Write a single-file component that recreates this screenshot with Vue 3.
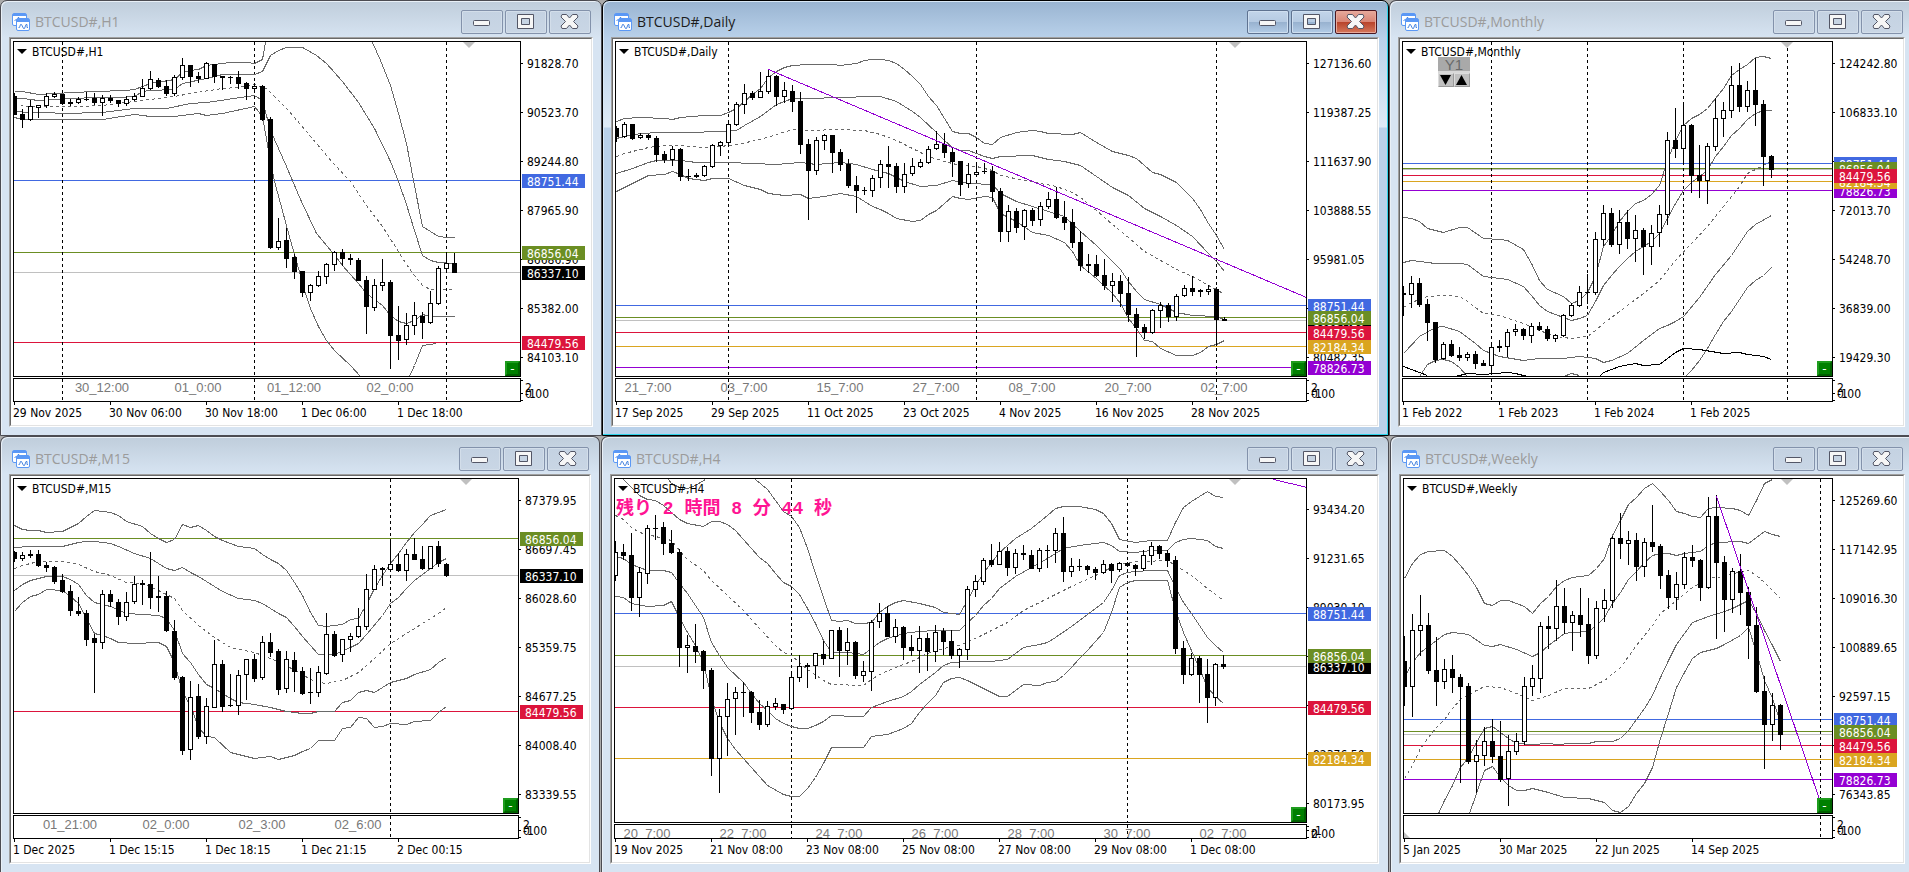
<script setup>
const STEP = 8
const UNITS = 3

const BLUE = '#4169e1'
const GREEN = '#6b8e23'
const RED = '#dc143c'
const GOLD = '#daa520'
const PURPLE = '#9400d3'
const SILVER = '#c0c0c0'

const sources = [
  {
    title: 'BTCUSD#,H1', origin: 126, height: 334, sub: 22, marker: 455,
    prices: [[190, '91828.70'], [337, '90523.70'], [484, '89244.80'], [631, '87965.90'], [778, '86686.90'], [925, '85382.00'], [1072, '84103.10']],
    levels: [[541, BLUE], [757, GREEN], [817, SILVER], [1027, RED]],
    tags: [[817, '#000', '86337.10'], [541, BLUE, '88751.44'], [757, GREEN, '86856.04'], [1027, RED, '84479.56']],
    seps: [6, 30, 54],
    times: ['29 Nov 2025', '30 Nov 06:00', '30 Nov 18:00', '1 Dec 06:00', '1 Dec 18:00'],
    notes: [[11, '30_12:00'], [23, '01_0:00'], [35, '01_12:00'], [47, '02_0:00']],
    trends: [],
    bands: [
      '0,273 1,273 3,282 5,279 10,274 14,271 15,268 16,258 17,250 20,238 21,218 22,210 23,208 24,195 27,187 29,187 30,190 31,177 31.4,126',
      '44.8,126 45.8,180 47,255 48,340 49,430 49.9,540 51,680 53,709 54,713 55,713',
      '0,294 1,296 3,300 5,297 10,292 13,291 15,288 16,275 17,270 20,268 21,250 24,235 26,223 30,222 31,215 32,165 33,150 34,142 36,142 37.8,165 39,190 41,245 43,307 45,385 47,485 48,545 49,612 50,690 51,765 52,780 53,787 55,790',
      '0,335 2,338 4,337 6,340 11,337 13,330 15,324 19,324 22,309 24,306 30,287 31,300 32,390 34,500 35.7,597 37.8,700 39.7,757 41,797 43,850 44,880 46,915 47,945 48,963 49,969 50,960 51,943 52,949 55,949',
      '0,352 1,358 6,358 11,357 15,343 17,349 20,349 23,340 24,346 26,339 30,319 31,350 31.7,450 32.5,545 33.2,610 34.5,720 35.7,825 36.4,880 37,925 38,980 39,1020 40,1050 42,1097 43.3,1128',
      '49.4,1128 50,1095 51,1035 52,1032 52.8,1030'
    ],
    mid: '0,315 2,319 6,320 8,319 11,315 15,305 17,298 20,290 22,280 26,266 28,262 30,253 31.5,265 34,325 35.7,373 37.8,430 39.9,490 42,545 44,617 46,680 47.8,745 49,793 50,825 51,855 52,867 55,868',
    bars: `-280 288 345 345|-326 342 361 383|+300 318 359 362|+315 316 322 353|+280 288 318 323|+277 283 291 294|-282 282 312 312|-296 307 311 319|+291 298 309 312|-276 296 299 302|-279 294 309 315|+285 295 308 347|-285 294 303 308|-300 300 312 322|+289 297 311 318|+280 288 299 303|+237 264 290 292|+213 237 266 270|-233 240 261 264|-240 257 282 288|+225 231 282 287|+173 195 234 239|-195 195 231 261|-216 228 237 250|+186 189 236 238|-192 192 231 250|-228 228 234 270|-228 231 234 251|-213 231 252 267|-246 249 266 300|+250 258 266 276|-255 258 360 363|-351 357 743 746|+654 723 743 750|-684 720 776 803|-763 771 816 837|-812 814 878 890|+852 856 878 903|+813 829 857 860|+789 793 830 852|+753 757 794 813|-747 756 776 797|-762 773 780 795|-774 780 842 843|-828 840 920 1002|+838 856 923 933|+777 847 857 873|-840 847 1007 1107|-918 1005 1022 1080|+939 975 1019 1035|+906 945 977 1005|-935 948 968 1017|+873 909 969 971|+798 804 911 914|+757 789 806 816|-759 789 818 819`
  },
  {
    title: 'BTCUSD#,Daily', active: true, origin: 126, height: 334, sub: 22, marker: 619,
    prices: [[190, '127136.60'], [337, '119387.25'], [484, '111637.90'], [631, '103888.55'], [778, '95981.05'], [925, '88231.70'], [1072, '80482.35']],
    levels: [[916, BLUE], [952, GREEN], [961, SILVER], [997, RED], [1039, GOLD], [1102, PURPLE]],
    tags: [[961, '#000', '86337.10'], [916, BLUE, '88751.44'], [952, GREEN, '86856.04'], [997, RED, '84479.56'], [1039, GOLD, '82184.34'], [1102, PURPLE, '78826.73']],
    seps: [14, 45, 75],
    times: ['17 Sep 2025', '29 Sep 2025', '11 Oct 2025', '23 Oct 2025', '4 Nov 2025', '16 Nov 2025', '28 Nov 2025'],
    notes: [[4, '21_7:00'], [16, '03_7:00'], [28, '15_7:00'], [40, '27_7:00'], [52, '08_7:00'], [64, '20_7:00'], [76, '02_7:00']],
    trends: ['19,208 86.3,892'],
    bands: [
      '0,364 1,356 3,352 6,356 7,357 8,353 11,347 13,345 14,337 15,325 16,303 17,283 18,265 19,232 20,215 21,203 22,196 24,194 27,193 28,196 30,190 31,182 32,178 33,178 34,182 35,191 36,208 37,228 38,252 39,290 40,315 41,355 42,393 43,399 44,400 45,412 46,430 47,433 48,413 50,397 52,391 53,395 54,401 57,403 58,397 60,427 62,455 64,465 65,476 66,495 67,517 68,523 70,548 72,595 73,628 74,670 75,705 76,748',
      '0,414 1,408 2,402 5,398 9,397 13,395 15,390 16,375 18,350 19,330 20,313 22,294 24,294 28,292 32,289 33,290 35,304 37,335 38,353 40,397 41,422 42,442 43,451 44,452 46,468 47,474 48,469 52,466 54,477 56,484 58,497 60,530 62,562 64,585 66,625 68,650 70,677 72,710 74,760 75,785 76,815',
      '0,521 2,504 4,487 5,482 8,481 10,488 14,487 17,491 20,492 23,487 25,492 28,488 30,492 32,507 34,520 36,543 38,558 40,555 42,541 44,549 47,553 48,581 50,603 52,620 54,633 56,650 58,693 60,735 62,783 63,808 64,845 65,873 66,897 68,913 70,938 72,945 75,950 76,958',
      '0,575 2,549 4,526 6,524 7,514 8,522 9,535 11,541 12,536 14,535 16,555 18,567 19,579 21,586 23,583 24,596 26,588 28,580 30,590 32,620 33,628 34,641 35,656 37,664 38,660 39,644 40,630 42,590 43,595 44,598 46,590 47,592 48,640 50,665 52,697 54,707 56,727 57,755 58,795 60,835 62,880 63,910 64,955 65,985 66,1020 67,1025 68,1045 70,1066 72,1066 73,1058 74,1040 75,1033 76,1021'
    ],
    mid: '0,469 1,460 4,443 6,437 8,437 11,442 13,440 15,434 18,417 20,402 22,388 24,391 28,388 31,391 33,402 35,420 37,445 39,468 41,485 43,497 45,500 47,510 48,526 51,540 55,560 57,577 58,592 60,630 62,672 64,712 66,755 68,782 70,808 72,830 74,855 75,868 76,884',
    bars: `-378 384 411 427|+366 373 411 414|-373 373 416 419|+399 405 415 418|-402 406 415 419|-408 414 464 486|-453 462 480 489|+438 448 479 498|-444 447 530 543|-507 528 531 543|-519 525 531 534|+495 499 527 530|+432 436 500 503|+423 427 438 467|+362 373 428 432|+306 313 374 377|+252 280 314 342|-273 280 293 299|+216 274 293 294|+208 229 275 281|-225 228 290 318|+246 271 290 308|-255 273 305 335|-276 303 434 462|-417 432 513 660|+411 421 512 524|+402 406 422 449|-405 405 458 518|-447 457 494 512|-477 493 557 563|-529 555 572 639|-561 570 573 584|+525 535 572 590|+481 493 535 563|-438 493 500 563|-490 499 560 578|+490 523 560 578|+474 499 523 528|+477 487 500 504|+438 448 488 491|+393 433 448 450|-399 432 458 473|-444 457 485 531|-484 484 554 588|+490 523 553 563|+487 517 523 526|-489 513 517 522|-498 513 575 606|-565 573 697 726|+615 634 697 726|-624 633 684 699|+627 631 682 720|-625 630 662 678|+606 619 661 678|+576 598 620 627|-561 597 654 657|-603 651 668 689|-627 666 728 744|-693 726 798 813|-762 792 797 819|-765 792 828 831|-777 825 857 870|+819 844 857 906|-825 843 882 920|-831 879 945 966|-924 942 984 1071|-972 981 998 1017|+927 931 998 1001|+906 916 932 983|-909 915 951 966|+882 889 950 963|+855 865 889 891|-829 864 876 889|-867 871 875 891|+855 868 875 885|-861 867 960 1038|-951 957 962 963`
  },
  {
    title: 'BTCUSD#,Monthly', selector: true, origin: 126, height: 334, sub: 22, marker: 384,
    prices: [[190, '124242.80'], [337, '106833.10'], [484, '89423.40'], [631, '72013.70'], [778, '54248.70'], [925, '36839.00'], [1072, '19429.30']],
    levels: [[490, BLUE], [508, SILVER], [505, GREEN], [526, RED], [544, GOLD], [571, PURPLE]],
    tags: [[490, BLUE, '88751.44'], [505, GREEN, '86856.04'], [571, PURPLE, '78826.73'], [544, GOLD, '82184.34'], [526, RED, '84479.56']],
    seps: [11, 23, 35, 48],
    times: ['1 Feb 2022', '1 Feb 2023', '1 Feb 2024', '1 Feb 2025'],
    notes: [],
    trends: [],
    average: [
      '0,1098 3,1126',
      '6.5,1128 8,1119 10,1122 13,1117 14,1119 15.5,1128',
      '24.5,1128 25,1118 27,1099 29,1090 30,1096 32,1093 33,1075 34,1056 35,1045 37,1049 40,1060 42,1058 43,1064 45,1070 46,1078'
    ],
    bands: [
      '0,651 1,655 2,665 3,684 5,696 7,682 8,682 10,714 12,718 13,722 15,748 16,790 17,840 18,868 20,890 21,910 22,900 23,878 24,830 25,740 26,705 27,665 28,635 29,611 30,600 31,583 32,555 33,480 34,420 35,375 36,355 37,342 38,325 39,296 40,265 41,225 42,207 43,192 44,172 45,169 46,174',
      '0,788 1,781 4,790 7,790 8,793 10,828 13,837 15,858 16,885 17,915 18,933 20,952 21,962 22,955 23,945 24,905 25,855 26,827 27,800 28,775 29,755 31,725 32,700 33,655 34,610 35,570 36,548 38,510 39,470 40,440 41,405 42,385 43,358 44,340 45,331 46,331',
      '0,1060 2,1010 4,983 5,979 7,993 9,1030 10,1050 12,1069 15,1081 17,1075 20,1074 22,1069 24,1076 25,1088 26,1081 28,1060 30,1020 32,984 33,975 34,963 35,948 37,893 39,823 41,765 43,695 44,672 46,645',
      '2,1128 3,1093 4,1080 5,1077 6,1083 7,1103 8,1128',
      '20,1128 21,1120 22,1125',
      '35.3,1128 36,1112 37,1080 38,1045 39,1003 40,965 41,935 43,863 44,840 45,825 46,801'
    ],
    mid: '0,922 1,907 3,888 5,885 7,889 8,903 10,940 12,947 15,970 17,992 19,1010 21,1015 23,1009 24,990 25,970 27,935 30,880 32,840 34,780 36,730 38,680 40,620 42,560 43,520 44,507 45,497 46,482',
    bars: `-858 879 886 948|+828 849 884 924|-834 849 914 921|-897 912 968 1023|-966 966 1079 1088|+1026 1033 1078 1079|-1020 1032 1067 1071|-1041 1066 1073 1083|+1056 1063 1073 1083|-1053 1062 1091 1107|-1080 1089 1098 1098|+1026 1042 1097 1119|-1020 1038 1043 1055|+987 996 1040 1071|+972 988 997 1008|-984 987 1007 1019|+969 979 1007 1028|-966 978 990 993|-978 987 1017 1023|+1002 1006 1016 1026|+942 946 1007 1011|+910 916 947 951|+858 877 917 920|-822 876 879 911|+696 717 878 885|+615 639 719 739|-624 639 734 741|+630 667 734 762|-630 666 716 747|+645 691 716 785|-684 690 740 825|+675 700 740 795|+615 643 700 741|+396 421 644 674|-324 420 446 474|+315 376 446 490|-372 375 527 578|-435 525 542 594|+430 439 542 612|+294 355 440 453|+306 331 356 410|+198 256 332 354|-189 255 320 335|+243 271 320 335|-174 270 314 378|-300 312 470 558|-465 468 510 534`
  },
  {
    title: 'BTCUSD#,M15', origin: 141, height: 334, sub: 22, marker: 452,
    prices: [[205, '87379.95'], [352, '86697.45'], [499, '86028.60'], [646, '85359.75'], [793, '84677.25'], [940, '84008.40'], [1087, '83339.55']],
    levels: [[319, GREEN], [430, SILVER], [838, RED]],
    tags: [[430, '#000', '86337.10'], [319, GREEN, '86856.04'], [838, RED, '84479.56']],
    seps: [47],
    times: ['1 Dec 2025', '1 Dec 15:15', '1 Dec 18:15', '1 Dec 21:15', '2 Dec 00:15'],
    notes: [[7, '01_21:00'], [19, '02_0:00'], [31, '02_3:00'], [43, '02_6:00']],
    trends: [],
    bands: [
      '0,280 1,291 2,295 3,295 4,300 6,299 8,275 9,252 10,236 12,240 13,249 14,267 16,283 17,305 18,318 19,330 20,322 21,277 22,286 23,280 24,294 25,312 26,324 28,342 30,350 31,366 32,383 33,395 34,415 35,450 36,490 37,540 38,580 39,582 41,576 42,563 43,558 44,517 45,470 46,430 47,395 48,365 49,330 50,300 51,278 52,251 53,240 54,232',
      '0,346 2,343 6,343 8,332 9,328 10,328 12,335 13,344 15,365 17,380 19,408 20,415 21,406 22,420 23,432 24,448 26,477 28,498 30,506 31,515 33,543 34,555 35,582 36,612 37,640 38,668 40,666 42,645 43,634 44,608 46,550 47,515 48,495 49,468 50,446 51,428 52,410 53,392 54,379',
      '0,476 1,458 2,444 4,432 6,432 7,441 8,458 9,490 10,512 12,522 14,543 16,546 18,550 19,560 20,595 21,665 22,690 23,728 24,758 25,768 27,800 28,810 30,817 32,826 34,838 36,844 37,844 38,839 40,838 41,812 42,805 43,782 44,776 45,780 47,752 49,740 50,728 52,712 53,690 54,675',
      '0,539 1,510 2,493 3,487 4,472 6,474 7,492 8,515 9,560 10,603 11,610 12,618 13,630 15,635 18,632 19,642 20,690 21,780 22,820 23,885 24,912 25,917 27,962 28,968 30,979 32,973 33,983 35,970 36,958 37,949 38,926 40,925 41,890 42,885 43,857 44,858 45,886 46,882 47,875 49,877 50,869 52,865 53,840 54,822'
    ],
    mid: '0,408 1,400 3,388 6,387 8,398 10,418 12,430 14,450 16,455 18,475 20,500 21,535 23,580 25,615 27,645 30,660 32,680 34,700 35,715 36,727 37,742 38,752 39,754 41,746 43,720 45,680 47,635 49,605 51,575 53,545 54,526',
    bars: `-357 360 381 390|+360 370 380 386|-354 366 371 377|-354 366 402 405|-390 399 407 419|-402 405 450 456|-426 444 480 483|-459 477 537 552|-495 537 545 552|-534 543 624 641|-606 618 633 783|+474 487 632 651|-474 486 510 524|-501 510 554 579|+480 511 554 567|+432 457 509 517|-444 453 459 518|-360 456 498 531|-432 492 497 540|-477 492 597 600|-564 597 738 744|-732 735 957 969|+747 796 953 984|-756 792 914 920|+798 823 914 936|+624 697 827 828|-684 696 825 839|-726 819 822 825|+714 730 821 849|+681 682 728 803|-666 681 740 749|+612 631 738 743|-603 630 662 674|-651 657 773 789|+657 682 770 783|-660 684 720 780|-705 717 785 788|-708 780 783 815|+702 720 782 795|+543 606 725 728|-597 606 671 674|+621 622 668 689|+603 613 623 659|+528 583 614 619|+426 472 584 593|+399 412 473 474|-405 408 413 462|+330 397 413 416|-363 396 416 419|+351 367 416 447|-318 366 383 384|-342 381 410 413|+342 343 410 411|-327 342 396 405|-393 396 432 435`
  },
  {
    title: 'BTCUSD#,H4', countdown: '残り 2 時間 8 分 44 秒', origin: 141, height: 343, sub: 13, marker: 620,
    prices: [[232, '93434.20'], [379, '91231.65'], [526, '89030.10'], [673, '86779.60'], [820, '84578.05'], [967, '82376.50'], [1114, '80173.95']],
    levels: [[544, BLUE], [670, GREEN], [703, SILVER], [826, RED], [979, GOLD]],
    tags: [[703, '#000', '86337.10'], [544, BLUE, '88751.44'], [670, GREEN, '86856.04'], [826, RED, '84479.56'], [979, GOLD, '82184.34']],
    seps: [22, 64],
    times: ['19 Nov 2025', '21 Nov 08:00', '23 Nov 08:00', '25 Nov 08:00', '27 Nov 08:00', '29 Nov 08:00', '1 Dec 08:00'],
    notes: [[4, '20_7:00'], [16, '22_7:00'], [28, '24_7:00'], [40, '26_7:00'], [52, '28_7:00'], [64, '30_7:00'], [76, '02_7:00']],
    trends: ['82.2,141 86.5,167'],
    bands: [
      '6.6,141 7,155 8,167 9,170 10,160 11,145 11.2,141',
      '17.5,141 19,172 20,205 21,238 22,253 23,285 24,350 25,425 26,495 27,565 28,569 29,565 30,573 31,575 32,570 33,540 34,523 35,510 36,505 38,513 40,527 41,540 43,547 44,505 45,460 46,425 47,390 48,360 50,318 52,290 54,250 55,228 56,223 58,223 60,233 61,243 62,275 63,322 65,331 67,325 69,325 70,270 71,226 72,208 74,178 75,193 76,197',
      '1,141 2,165 3,190 4,202 5,204 6,220 7,240 8,262 9,274 11,284 12,268 13,268 14,277 15,295 16,323 17,348 18,375 19,395 20,423 21,450 22,464 23,487 24,530 25,575 26,625 27,660 29,662 31,667 32,650 33,630 34,618 36,603 38,597 40,595 43,595 44,570 45,550 46,520 47,500 48,470 50,432 52,405 54,378 56,348 58,339 61,331 62,340 63,357 65,361 67,354 69,355 70,332 71,321 72,318 74,325 75,343 76,350',
      '0,372 1,378 2,398 4,414 6,416 7,422 8,455 9,485 10,520 11,555 12,630 13,670 14,705 16,750 17,785 18,815 19,835 20,858 21,874 22,883 23,888 24,890 25,880 26,868 27,851 30,852 31,853 32,826 34,808 36,793 37,778 38,758 39,740 40,722 41,700 42,690 44,688 47,688 48,685 49,681 50,664 51,645 53,637 54,630 55,617 57,583 59,548 60,530 61,510 62,475 63,430 64,422 65,418 67,415 69,415 70,465 71,510 72,545 73,580 74,617 75,640 76,660',
      '0,493 1,497 2,515 4,523 6,520 7,509 8,555 9,600 10,640 11,690 12,800 13,870 14,920 15,953 17,1005 19,1060 21,1087 22,1093 23,1093 24,1070 25,1035 26,995 27,946 31,946 32,912 34,906 36,890 37,873 38,840 39,815 40,790 41,750 42,740 43,736 44,744 46,770 48,793 49,793 50,775 51,758 53,760 54,752 55,747 56,730 57,705 58,680 59,655 61,600 62,540 63,465 64,450 65,445 69,445 70,535 71,600 72,655 73,710 74,765 75,793 76,813'
    ],
    mid: '0,249 1,262 2,285 3,300 5,312 7,325 8,355 9,382 11,415 12,445 14,490 16,535 18,590 20,640 21,662 22,670 23,690 24,712 26,745 27,757 31,760 32,742 33,728 35,705 37,688 39,665 41,650 43,640 45,618 47,595 49,570 51,535 54,500 57,462 60,430 62,405 64,392 66,388 69,384 70,400 72,430 74,470 76,504',
    bars: `+327 361 431 446|-336 360 371 384|-303 369 497 537|+405 421 497 555|+279 289 425 456|-249 288 291 324|-270 285 335 369|-294 333 363 366|-351 360 647 705|+609 640 647 723|-576 642 659 693|-654 657 717 771|-708 714 981 1032|+831 853 980 1083|+753 802 854 972|+765 781 800 909|-750 780 783 855|-777 780 842 873|-804 840 879 894|+807 823 878 885|+798 814 824 834|-815 816 833 846|+717 736 832 834|+669 703 738 750|-693 699 705 768|+663 664 701 741|-627 666 680 699|+594 595 680 681|-585 594 656 735|+588 631 656 699|-627 630 732 741|+687 718 731 750|+564 571 719 777|+513 544 569 588|-522 543 615 616|+561 586 614 633|-583 585 648 684|-609 645 657 672|+582 619 656 723|-603 618 659 717|+579 601 661 690|-588 597 630 669|-594 627 671 681|+648 652 671 708|+462 472 653 684|+429 448 473 494|+378 385 449 459|-336 384 398 405|+330 358 398 399|-345 357 408 432|+351 364 407 426|-339 363 369 384|-354 369 411 411|+348 355 410 420|-339 354 357 408|+288 304 356 393|-255 303 420 450|+378 403 419 435|-381 402 405 417|-399 402 414 429|-405 411 423 444|+384 397 423 425|-393 396 416 453|+390 394 413 420|-390 393 402 405|-396 399 411 432|+354 370 410 417|+330 343 371 399|-339 342 365 381|-354 363 386 405|-372 384 651 666|-627 648 728 756|+663 679 728 732|-672 678 728 812|-681 726 797 873|+693 697 797 822|-669 696 705 711`
  },
  {
    title: 'BTCUSD#,Weekly', corner: true, origin: 141, height: 334, sub: 22, marker: 383,
    prices: [[205, '125269.60'], [352, '117142.95'], [499, '109016.30'], [646, '100889.65'], [793, '92597.15'], [940, '84470.50'], [1087, '76343.85']],
    levels: [[862, BLUE], [898, GREEN], [907, SILVER], [940, RED], [982, GOLD], [1042, PURPLE]],
    tags: [[907, '#000', '86337.10'], [862, BLUE, '88751.44'], [898, GREEN, '86856.04'], [940, RED, '84479.56'], [982, GOLD, '82184.34'], [1042, PURPLE, '78826.73']],
    seps: [52],
    times: ['5 Jan 2025', '30 Mar 2025', '22 Jun 2025', '14 Sep 2025'],
    notes: [],
    trends: ['39,192 52,1110'],
    bands: [
      '0,440 1,393 2,368 3,358 5,355 6,372 7,400 8,430 9,467 10,513 11,520 12,505 13,505 15,523 16,544 17,515 18,492 19,462 20,445 21,436 23,431 24,408 25,380 26,310 27,265 28,218 29,195 30,168 31,154 32,177 33,205 34,238 35,244 36,254 37,256 38,229 39,227 41,229 42,235 43,250 44,205 45,155 46,141',
      '0,735 1,690 2,660 4,625 5,608 6,601 8,607 10,639 11,643 12,637 14,652 16,673 17,660 18,640 19,622 20,605 21,601 23,598 24,580 25,555 26,515 27,480 28,443 29,418 30,392 31,370 32,363 33,364 34,371 35,365 37,358 38,340 39,330 42,328 43,334 45,298 46,306 47,313',
      '4.2,1143 5,1105 6,1060 7,1005 8,975 9,930 10,890 11,883 12,900 13,918 14,935 16,938 18,934 19,937 21,934 23,934 24,928 26,927 27,920 28,895 30,830 31,790 32,735 33,685 34,637 35,603 36,572 38,552 40,537 41,528 42,516 43,505 44,545 45,595 46,640 47,687',
      '8.1,1143 9,1085 10,1015 11,1002 12,1035 13,1060 14,1075 15,1076 16,1070 18,1082 20,1097 23,1099 24,1104 25,1112 26,1135 27,1140 28,1122 29,1085 30,1055 31,1005 32,920 33,845 34,765 35,720 36,678 37,662 39,648 40,638 42,610 43,585 44,660 45,745 46,800 47,870'
    ],
    mid: '0,1040 1,1000 2,950 3,915 4,885 5,862 6,830 7,803 9,775 10,763 12,765 14,785 16,804 18,790 20,769 23,768 25,745 27,705 29,640 31,580 32,545 34,505 36,465 38,440 40,433 42,417 43,415 44,430 45,450 46,475 47,498',
    bars: `-612 687 765 822|+546 595 764 855|+489 580 596 671|-543 579 716 725|-615 714 749 822|+681 712 749 770|-669 711 738 783|-726 735 765 1053|-753 762 990 996|+924 970 989 1083|+885 928 971 1002|-861 927 974 993|-867 972 1043 1050|+909 958 1042 1121|+903 928 959 968|+735 763 929 938|+699 739 764 792|+570 583 740 783|-552 582 590 651|+444 523 590 627|-468 522 572 606|+537 550 572 657|-468 549 578 615|-498 576 671 696|+507 529 671 680|+471 505 530 570|+312 319 506 527|-243 318 335 380|+297 325 335 399|-303 324 404 447|+318 331 404 435|-219 330 344 359|-336 342 431 470|-414 429 497 531|+420 457 497 533|+360 376 458 470|-339 375 386 405|-381 384 467 507|+195 253 467 470|-189 252 392 621|-372 390 503 600|+408 418 503 543|-366 417 482 549|-465 480 581 681|-525 579 779 783|-732 777 879 1010|+783 820 878 927|-816 819 908 953`
  }
]

function prepare(src) {
  const near = (v) => Math.round((v - src.origin) / UNITS)
  const row = (v) => Math.floor((v - src.origin) / UNITS)
  const path = (text) =>
    text.split(' ').map((pair) => {
      const [i, v] = pair.split(',').map(Number)
      return `${Math.round(i * STEP) + 0.5},${row(v) + 0.5}`
    }).join(' ')
  const bars = src.bars.split('|').map((text, i) => {
    const hollow = text[0] === '+'
    const [high, top, bottom, low] = text.slice(1).split(' ').map(near)
    const size = Math.max(bottom - top, hollow ? 3 : 1)
    return { x: i * STEP, high, top, size, hollow, wick: Math.max(low, top + size) - high }
  })
  return {
    ...src,
    bars,
    bands: src.bands.map(path),
    average: (src.average || []).map(path),
    trends: src.trends.map(path),
    mid: path(src.mid),
    levels: src.levels.map(([v, color]) => ({ y: row(v), color })),
    tags: src.tags.map(([v, color, text]) => ({ y: row(v) + 1, color, text })),
    prices: src.prices.map(([v, text]) => ({ y: row(v) + 1, text })),
    seps: src.seps.map((i) => i * STEP),
    times: src.times.map((text, i) => ({ x: i * 12 * STEP + 1, text })),
    notes: src.notes.map(([i, text]) => ({ x: i * STEP, text })),
    frame: src.height + src.sub + 5
  }
}

const windows = sources.map(prepare)
const rows = [windows.slice(0, 3), windows.slice(3)]
</script>

<template>
  <main class="desktop">
    <div v-for="(row, r) in rows" :key="r" class="row" :class="r ? 'row-lower' : 'row-upper'">
      <section v-for="w in row" :key="w.title" class="window" :class="{ active: w.active }">
        <header class="titlebar">
          <svg class="app-icon" width="18" height="18" viewBox="0 0 18 18" aria-hidden="true">
            <rect x="0.5" y="0.5" width="14" height="12" rx="1.5" fill="#fff" stroke="#5b98f5" />
            <path d="M1 1h13v2H1z" fill="#5b98f5" />
            <path d="M2.5 8l2-2 1 1 1-3 1 3h1l1-2 2 2" fill="none" stroke="#4a86e0" />
            <rect x="4.5" y="5.5" width="13" height="12" rx="1.5" fill="#fff" stroke="#5b98f5" />
            <path d="M5 6h12v3H5z" fill="#5b98f5" />
            <path d="M6.500 14.500h1l1-3h1l2 4h1l1.500-4h1v3h1" fill="none" stroke="#4a86e0" />
          </svg>
          <h2>{{ w.title }}</h2>
          <div class="controls">
            <button type="button" aria-label="Minimize">
              <svg width="20" height="18" viewBox="0 0 20 18"><rect x="1.5" y="7.5" width="16" height="5" rx="1" fill="#f6f6f6" stroke="#535666" /></svg>
            </button>
            <button type="button" aria-label="Maximize">
              <svg width="20" height="18" viewBox="0 0 20 18"><path d="M1.500 1.500h16v14h-16zM5.500 5.500v6h8v-6z" fill="#f6f6f6" fill-rule="evenodd" stroke="#535666" stroke-linejoin="round" /></svg>
            </button>
            <button type="button" class="close" aria-label="Close">
              <svg width="20" height="18" viewBox="0 0 20 18"><path d="M2 1.500h4.500l3 3.500 3-3.500h4.500l1 2.500-4.500 4.500 4.500 4.500-1 2.500h-4.500l-3-3.500-3 3.500h-4.500l-1-2.500 4.500-4.500-4.500-4.500z" fill="#f6f6f6" stroke="#535666" stroke-linejoin="round" /></svg>
            </button>
          </div>
        </header>
        <div class="client">
          <div class="sheet">
            <div class="plot">
              <svg width="100%" :height="w.height" class="canvas">
                <rect v-for="(l, i) in w.levels" :key="'l' + i" x="0" :y="l.y" width="100%" height="1" :fill="l.color" />
                <line v-for="x in w.seps" :key="'s' + x" class="sep" :x1="x + 0.5" y1="0" :x2="x + 0.5" y2="100%" />
                <polyline v-for="(p, i) in w.bands" :key="'b' + i" class="band" :points="p" />
                <polyline class="band dashed" :points="w.mid" />
                <polyline v-for="(p, i) in w.average" :key="'a' + i" class="average" :points="p" />
                <g v-for="b in w.bars" :key="b.x">
                  <rect :x="b.x" :y="b.high" width="1" :height="b.wick" />
                  <rect v-if="b.hollow" class="hollow" :x="b.x - 1.5" :y="b.top + 0.5" width="4" :height="b.size - 1" />
                  <rect v-else :x="b.x - 2" :y="b.top" width="5" :height="b.size" />
                </g>
                <polyline v-for="(p, i) in w.trends" :key="'t' + i" class="trend" :points="p" />
                <path :d="`M${w.marker - 6} 0h12l-6 6z`" fill="#c0c0c0" />
                <path d="M3 7h10l-5 5z" />
                <text class="label" x="18" y="14">{{ w.title }}</text>
                <text v-if="w.countdown" class="countdown" x="1" y="35">{{ w.countdown }}</text>
              </svg>
              <div v-if="w.selector" class="selector">
                <span>Y1</span>
                <button type="button" aria-label="Previous"><svg width="14" height="12"><path d="M1 1h11l-5.500 10z" /></svg></button>
                <button type="button" aria-label="Next"><svg width="14" height="12"><path d="M1 11h11l-5.500-10z" /></svg></button>
              </div>
              <button type="button" class="toggle">-</button>
            </div>
            <div class="sub">
              <svg width="100%" :height="w.sub" class="canvas">
                <line v-for="x in w.seps" :key="x" class="sep" :x1="x + 0.5" y1="0" :x2="x + 0.5" y2="100%" />
                <text v-for="n in w.notes" :key="n.x" class="note" :x="n.x" y="13">{{ n.text }}</text>
                <path v-if="w.corner" d="M0 16l6 6H0z" fill="#c0c0c0" />
              </svg>
            </div>
            <svg class="times" width="100%" height="23">
              <g v-for="t in w.times" :key="t.x">
                <rect :x="t.x" y="0" width="1" height="3" />
                <text class="label" :x="t.x - 1" y="15">{{ t.text }}</text>
              </g>
            </svg>
            <svg class="axis" width="70" :height="w.frame">
              <g v-for="p in w.prices" :key="p.text">
                <rect x="0" :y="p.y" width="2" height="1" />
                <text class="label" x="6" :y="p.y + 5">{{ p.text }}</text>
              </g>
              <g v-for="t in w.tags" :key="t.text">
                <rect x="1" :y="t.y - 6" width="63" height="14" :fill="t.color" />
                <text class="label tag" x="6" :y="t.y + 6">{{ t.text }}</text>
              </g>
              <rect x="0" :y="w.height + 5" width="2" height="1" />
              <rect x="0" :y="w.height + w.sub - 4" width="2" height="1" />
              <rect x="0" :y="w.height + w.sub + 3" width="2" height="1" />
              <text class="label" x="4" :y="w.sub > 20 ? w.frame - 10 : w.frame - 1">2</text>
              <text class="label" x="4" :y="w.sub > 20 ? w.frame - 4 : w.frame - 1">0.00</text>
              <text class="label" x="4" :y="w.frame - 4">-1</text>
            </svg>
          </div>
        </div>
      </section>
    </div>
  </main>
</template>

<style>
body {
  margin: 0;
  background: #ababab;
}
</style>

<style scoped>
.desktop {
  min-width: 1200px;
  background: #ababab;
  overflow: hidden;
}
.row {
  display: grid;
}
.row-upper {
  grid-template-columns: minmax(0, 602fr) minmax(0, 787fr) minmax(0, 520fr);
}
.row-lower {
  grid-template-columns: minmax(0, 600fr) minmax(0, 788fr) minmax(0, 519fr);
  column-gap: 1px;
}
.window {
  display: flex;
  flex-direction: column;
  padding: 0 8px 8px;
  border: 1px solid #4c4c52;
  border-radius: 7px 7px 0 0;
  background: linear-gradient(#bfcddb, #d7e4f2 37px);
  box-shadow: inset 1px 1px 0 #e9f0f7;
}
.window:nth-child(2) {
  padding-right: 9px;
}
.window:last-child {
  padding-right: 4px;
  border-right: 0;
  border-top-right-radius: 0;
}
.row-lower .window {
  padding-top: 1px;
  border-bottom: 0;
}
.window.active {
  border-color: #000;
  background: linear-gradient(#99b4d1, #b9d1ea 37px, #dfebf7 126px, #b9d1ea 127px);
  box-shadow: inset -1px -1px 0 #2fd3ea, inset 1px 1px 0 #d9e8f6;
}
.titlebar {
  display: flex;
  align-items: center;
  height: 30px;
  padding: 6px 2px 0 3px;
}
.app-icon {
  flex: none;
}
.titlebar h2 {
  flex: 1;
  min-width: 0;
  margin: 0 0 0 5px;
  overflow: hidden;
  color: #9b9b9b;
  font: 400 14px/20px "Open Sans", "Noto Sans", sans-serif;
  white-space: nowrap;
}
.active .titlebar h2 {
  color: #1c1c1c;
}
.controls {
  display: flex;
  gap: 2px;
}
.controls button {
  display: grid;
  place-items: center;
  width: 42px;
  height: 24px;
  padding: 0;
  border: 1px solid #8392ab;
  border-radius: 2px;
  background: linear-gradient(#c4d2e2, #c9d6e5);
  box-shadow: inset 0 0 0 1px #d3deea;
}
.active .controls button {
  border-color: #5f7391;
  background: linear-gradient(#c2d5ea, #b5cae2 50%, #97b1cf 50%, #b3cce6);
  box-shadow: inset 0 0 0 1px #cfdff0;
}
.active .controls .close {
  border-color: #4a1620;
  background: linear-gradient(#e5a99c, #d98474 50%, #b8422a 50%, #d5785c);
  box-shadow: inset 0 0 0 1px #e8a99a;
}
.client {
  border: 1px solid;
  border-color: #a0a0a0 #fff #fff #a0a0a0;
}
.sheet {
  display: grid;
  grid-template-columns: minmax(0, 1fr) 70px;
  padding: 2px 0 0 2px;
  border: 1px solid;
  border-color: #696969 #e3e3e3 #e3e3e3 #696969;
  background: #fff;
}
.plot,
.sub {
  position: relative;
  grid-column: 1;
  border: 1px solid #000;
}
.sub {
  margin-top: 1px;
}
.canvas,
.times,
.axis {
  display: block;
  overflow: hidden;
}
.times {
  grid-column: 1 / 3;
}
.axis {
  grid-column: 2;
  grid-row: 1 / 3;
}
.sep {
  stroke: #000;
  stroke-dasharray: 3 3;
}
.band,
.average,
.trend {
  fill: none;
  stroke: #696969;
  shape-rendering: crispEdges;
}
.average {
  stroke: #000;
}
.trend {
  stroke: #9400d3;
}
.dashed {
  stroke-dasharray: 3 3;
}
.hollow {
  fill: #fff;
  stroke: #000;
}
.label {
  font: 12px "DejaVu Sans Condensed", "DejaVu Sans", sans-serif;
}
.tag {
  fill: #fff;
}
.note {
  fill: #787878;
  font: 13px "Liberation Sans", Arial, sans-serif;
  text-anchor: middle;
}
.countdown {
  fill: #ff1493;
  font: bold 18px "Liberation Mono", "Noto Sans CJK JP", monospace;
}
.toggle {
  position: absolute;
  right: 0;
  bottom: 0;
  width: 15px;
  height: 15px;
  padding: 0;
  border: 2px solid;
  border-color: #1e9c1e #006000 #006000 #1e9c1e;
  background: #008000;
  color: #fff;
  font: 12px/10px "DejaVu Sans", sans-serif;
}
.selector {
  position: absolute;
  top: 15px;
  left: 35px;
  display: grid;
  grid-template-columns: 1fr 1fr;
  width: 32px;
}
.selector span {
  grid-column: 1 / 3;
  height: 14px;
  border-bottom: 2px solid #d8d8d8;
  background: #a9a9a9;
  color: #696969;
  font: 15px/15px "Liberation Sans", Arial, sans-serif;
  text-align: center;
}
.selector button {
  height: 14px;
  padding: 0;
  border: 1px solid;
  border-color: #dcdcdc #9a9a9a #9a9a9a #dcdcdc;
  background: #c0c0c0;
}
.selector svg {
  display: block;
  margin: 0 auto;
}
</style>
